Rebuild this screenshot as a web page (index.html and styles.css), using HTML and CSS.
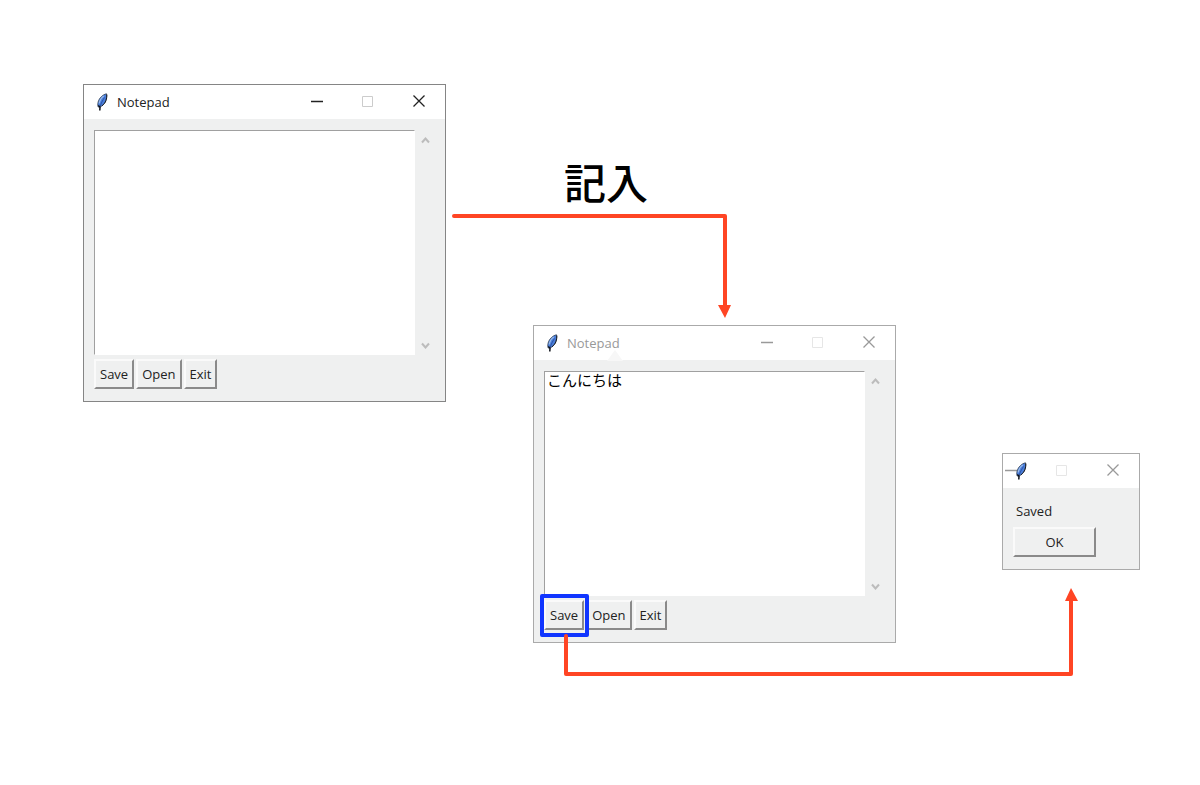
FILE: index.html
```html
<!DOCTYPE html>
<html lang="ja">

<head>
  <meta charset="UTF-8">
  <meta name="viewport" content="width=device-width, initial-scale=1.0">
  <title>Notepad</title>
  <link rel="stylesheet" href="styles.css">
</head>

<body>
  <!-- shared icons -->
  <svg class="defs" aria-hidden="true">
    <symbol id="feather" viewBox="0 0 12 18">
      <path d="M10.500.8C7 1.400 3 5 2 9.400c-.4 2-.3 3.700.3 4.700L4 14.300C7 12.400 9.500 9.800 10.300 5.800c.4-2 .5-3.800.2-5z" fill="#4a7fdc" stroke="#3a4450" stroke-width=".8" />
      <path d="M7.800 3C5.500 4.500 3.800 7.500 3.200 10.500" fill="none" stroke="#9dbbe8" stroke-width="1.200" />
      <path d="M10.800 1.500c.2 4-.8 8.500-4.800 11.300" fill="none" stroke="#141a24" stroke-width="1" />
      <path d="M8.500 4.500C6.500 7.500 5 10.500 4.300 13" fill="none" stroke="#1f3f8c" stroke-width=".7" />
      <path d="M2.300 12.500l1.700 1.500-.2 3.500" fill="none" stroke="#0b0f18" stroke-width="1.500" />
    </symbol>
    <symbol id="min" viewBox="0 0 13 13"><path d="M0 6.500h12" fill="none" stroke="currentColor" stroke-width="1.500" /></symbol>
    <symbol id="max" viewBox="0 0 13 13"><path d="M.5 1.500h10v10h-10z" fill="none" stroke="currentColor" /></symbol>
    <symbol id="close" viewBox="0 0 13 13"><path d="M.5 .5l11 11M11.500 .5L.5 11.500" fill="none" stroke="currentColor" stroke-width="1.300" /></symbol>
    <symbol id="up" viewBox="0 0 9 8"><path d="M1 6.500l3.500-4 3.500 4" fill="none" stroke="#bcbcbc" stroke-width="2" /></symbol>
    <symbol id="down" viewBox="0 0 9 8"><path d="M1 2.500l3.500 4 3.500-4" fill="none" stroke="#bcbcbc" stroke-width="2" /></symbol>
  </svg>

  <main class="canvas">
    <section class="window window-empty">
      <header class="titlebar">
        <svg class="feather"><use href="#feather" /></svg>
        <span class="title">Notepad</span>
        <div class="controls">
          <button aria-label="Minimize"><svg><use href="#min" /></svg></button>
          <button class="max" aria-label="Maximize"><svg><use href="#max" /></svg></button>
          <button aria-label="Close"><svg><use href="#close" /></svg></button>
        </div>
      </header>
      <div class="content">
        <div class="editor">
          <textarea aria-label="Text"></textarea>
          <div class="scroll">
            <button aria-label="Scroll up"><svg><use href="#up" /></svg></button>
            <button aria-label="Scroll down"><svg><use href="#down" /></svg></button>
          </div>
        </div>
        <div class="buttons">
          <button class="btn">Save</button>
          <button class="btn">Open</button>
          <button class="btn">Exit</button>
        </div>
      </div>
    </section>

    <p class="step">記入</p>

    <section class="window window-filled inactive">
      <header class="titlebar">
        <svg class="feather"><use href="#feather" /></svg>
        <span class="title">Notepad</span>
        <div class="controls">
          <button aria-label="Minimize"><svg><use href="#min" /></svg></button>
          <button class="max" aria-label="Maximize"><svg><use href="#max" /></svg></button>
          <button aria-label="Close"><svg><use href="#close" /></svg></button>
        </div>
      </header>
      <div class="content">
        <div class="editor">
          <textarea aria-label="Text">こんにちは</textarea>
          <div class="scroll">
            <button aria-label="Scroll up"><svg><use href="#up" /></svg></button>
            <button aria-label="Scroll down"><svg><use href="#down" /></svg></button>
          </div>
        </div>
        <div class="buttons">
          <button class="btn">Save</button>
          <button class="btn">Open</button>
          <button class="btn">Exit</button>
        </div>
      </div>
    </section>

    <section class="window dialog inactive">
      <header class="titlebar">
        <svg class="feather"><use href="#feather" /></svg>
        <div class="controls">
          <button aria-label="Minimize"><svg><use href="#min" /></svg></button>
          <button class="max" aria-label="Maximize"><svg><use href="#max" /></svg></button>
          <button aria-label="Close"><svg><use href="#close" /></svg></button>
        </div>
      </header>
      <div class="content">
        <p class="message">Saved</p>
        <button class="btn btn-ok">OK</button>
      </div>
    </section>

    <!-- arrows between the windows -->
    <svg class="arrows" width="1200" height="785" viewBox="0 0 1200 785" aria-hidden="true">
      <path d="M607 361l8-11 8 11z" fill="#f7f7f7" />
      <rect x="542" y="596" width="45" height="39" fill="none" stroke="#1035ff" stroke-width="4" stroke-linejoin="round" />
      <g fill="none" stroke="#ff4524" stroke-width="4" stroke-linecap="round" stroke-linejoin="round">
        <path d="M454 216H725V306" />
        <path d="M566 636V674H1071V600" />
      </g>
      <path d="M718 305h13l-6 13zM1065 601h13l-7-13z" fill="#ff4524" />
    </svg>
  </main>
</body>

</html>
```

FILE: styles.css
```css
* {
  box-sizing: border-box;
}

body {
  margin: 0;
  background-color: #fff;
  color: #222;
  font: 13px/20px "Open Sans", "Noto Sans CJK JP", sans-serif;
}

p {
  margin: 0;
}

button {
  padding: 0;
  border: none;
  background-color: transparent;
  color: inherit;
  font: inherit;
}

.defs {
  display: none;
}

.canvas {
  position: relative;
  min-height: 100vh;
}

/* windows */
.window {
  position: absolute;
  width: 363px;
  border: 1px solid #858585;
  background-color: #eff0f0;
}

.window-empty {
  left: 83px;
  top: 84px;
}

.window-filled {
  left: 533px;
  top: 325px;
}

.dialog {
  left: 1002px;
  top: 453px;
  width: 138px;
}

.inactive {
  border-color: #aaa;
}

.titlebar {
  position: relative;
  display: flex;
  align-items: center;
  gap: 9px;
  height: 34px;
  padding-left: 12px;
  overflow: hidden;
  background-color: #fff;
}

.inactive .titlebar {
  color: #999;
}

.feather {
  position: relative;
  z-index: 1;
  width: 12px;
  height: 18px;
}

.controls {
  position: absolute;
  top: 0;
  right: 0;
  display: flex;
}

.controls button {
  display: flex;
  align-items: center;
  justify-content: center;
  width: 51px;
  height: 33px;
}

.controls svg {
  width: 13px;
  height: 13px;
}

.controls .max {
  color: #ccc;
}

.inactive .controls .max {
  color: #e6e6e6;
}

.content {
  padding: 11px 10px 12px;
}

.editor {
  display: flex;
  height: 225px;
}

textarea {
  flex: 1;
  padding: 0 2px;
  border: 1px solid #fff;
  border-top-color: #a0a0a0;
  border-left-color: #a0a0a0;
  outline: none;
  resize: none;
  background-color: #fff;
  color: #000;
  font: 15px/16px "Noto Sans CJK JP", sans-serif;
}

.scroll {
  display: flex;
  flex-direction: column;
  justify-content: space-between;
  width: 20px;
}

.scroll button {
  display: flex;
  align-items: center;
  justify-content: center;
  height: 20px;
}

.scroll svg {
  width: 9px;
  height: 8px;
}

.buttons {
  display: flex;
  gap: 2px;
  margin-top: 4px;
}

.btn {
  height: 30px;
  padding: 0 4px;
  border: 2px solid #8a8a8a;
  border-top-color: #fafafa;
  border-left-color: #fafafa;
  background-color: #eff0f0;
}

.dialog .content {
  padding-top: 13px;
}

.message {
  padding-left: 3px;
}

.btn-ok {
  display: block;
  width: 83px;
  margin-top: 6px;
}

/* annotations */
.step {
  position: absolute;
  left: 564px;
  top: 151px;
  color: #000;
  font: 500 42px/60px "Noto Sans CJK JP", sans-serif;
}

.arrows {
  position: absolute;
  left: 0;
  top: 0;
  pointer-events: none;
}
```
